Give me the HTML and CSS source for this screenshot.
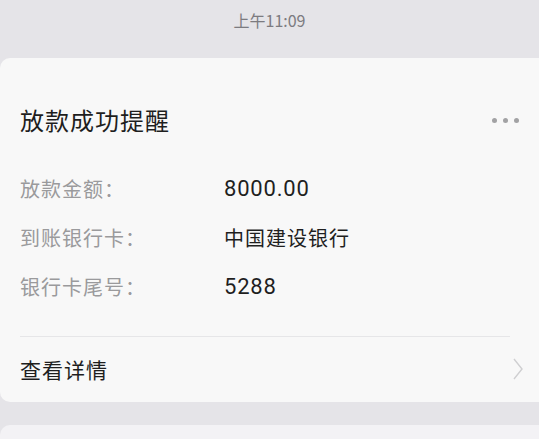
FILE: index.html
```html
<!DOCTYPE html>
<html lang="zh-CN">
<head>
<meta charset="utf-8">
<link rel="stylesheet" href="styles.css">
</head>
<body>
<div class="time">上午11:09</div>
<div class="card">
  <div class="head">
    <div class="title">放款成功提醒</div>
    <div class="dots"><span></span><span></span><span></span></div>
  </div>
  <div class="rows">
    <div class="row"><div class="label">放款金额：</div><div class="value num">8000.00</div></div>
    <div class="row"><div class="label">到账银行卡：</div><div class="value">中国建设银行</div></div>
    <div class="row"><div class="label">银行卡尾号：</div><div class="value num">5288</div></div>
  </div>
  <div class="divider"></div>
  <div class="detail">
    <div class="detail-text">查看详情</div>
    <svg class="chev" width="12" height="24" viewBox="0 0 12 24"><path d="M2 2 L10 12 L2 22" fill="none" stroke="#cfcfd1" stroke-width="1.4"/></svg>
  </div>
</div>
<div class="next"></div>
</body>
</html>
```
FILE: styles.css
```css
html, body {
  margin: 0;
  padding: 0;
}
body {
  width: 539px;
  height: 439px;
  overflow: hidden;
  background: #e5e4e8;
  font-family: "Noto Sans CJK SC", "Noto Sans", sans-serif;
}
.time {
  height: 58px;
  padding-top: 9px;
  box-sizing: border-box;
  text-align: center;
  font-size: 16px;
  color: #7c7b80;
  line-height: 22px;
}
.card {
  background: #f8f8f8;
  border-radius: 10px 0 0 10px;
  height: 344px;
  box-sizing: border-box;
  padding: 0 0 0 20px;
}
.head {
  display: flex;
  align-items: center;
  justify-content: space-between;
  height: 106px;
  padding: 46px 20px 28px 0;
  box-sizing: border-box;
}
.title {
  font-size: 24px;
  line-height: 32px;
  letter-spacing: 1px;
  color: #1e1e1e;
}
.dots {
  display: flex;
  gap: 6px;
}
.dots span {
  width: 5px;
  height: 5px;
  border-radius: 50%;
  background: #a2a2a4;
}
.rows {
  display: flex;
  flex-direction: column;
}
.row {
  display: flex;
  align-items: center;
  height: 49px;
  font-size: 20px;
}
.label {
  width: 204px;
  color: #9a9a9c;
  letter-spacing: 1px;
}
.value {
  color: #1f1f1f;
  letter-spacing: 1px;
}
.value.num {
  font-family: "Roboto", "Noto Sans", sans-serif;
  font-size: 22px;
  letter-spacing: 0.8px;
}
.divider {
  margin-top: 25px;
  margin-right: 29px;
  height: 1px;
  background: #e6e6e8;
}
.detail {
  display: flex;
  align-items: center;
  justify-content: space-between;
  height: 64px;
  padding-right: 15px;
}
.detail-text {
  font-size: 21px;
  letter-spacing: 1px;
  color: #1e1e1e;
}
.chev {
  display: block;
}
.next {
  margin-top: 23px;
  height: 20px;
  background: #f3f2f5;
  border-radius: 10px 0 0 0;
}
```
